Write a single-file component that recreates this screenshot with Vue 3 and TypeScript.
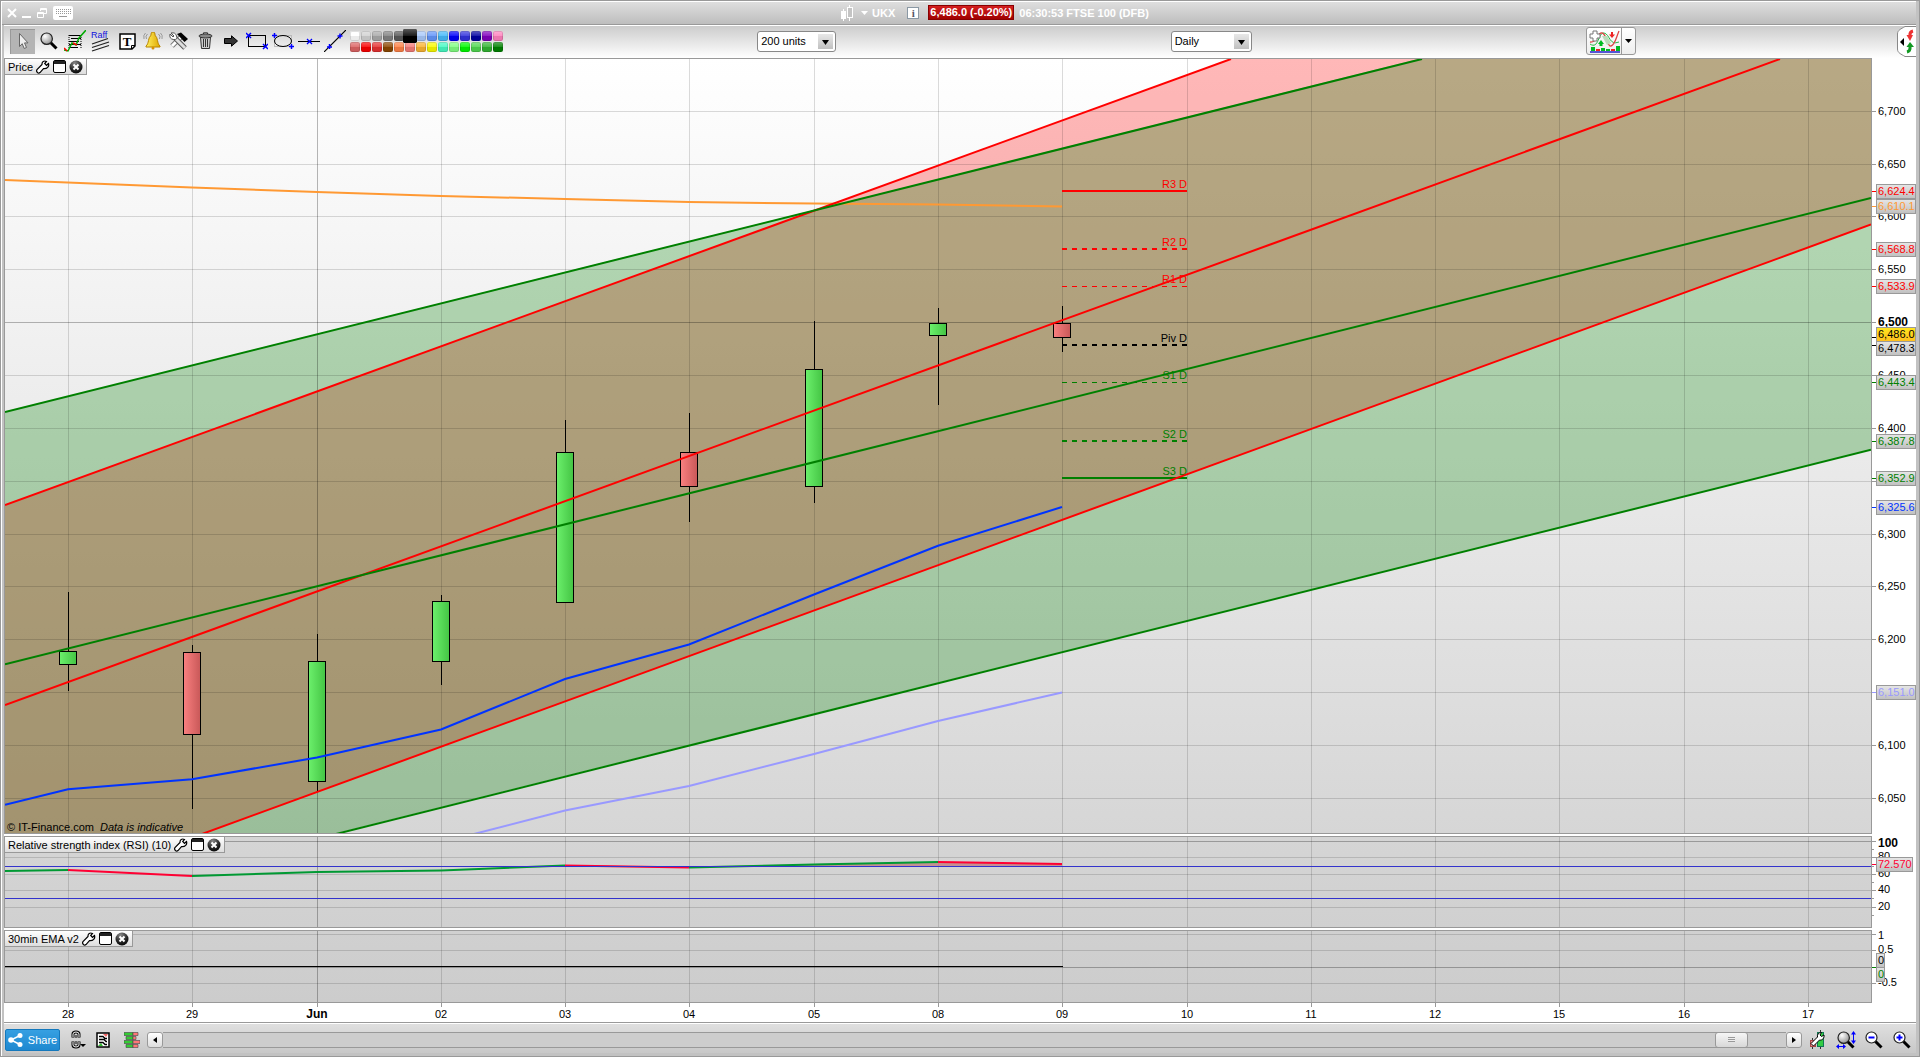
<script setup lang="ts">
import { computed, onBeforeUnmount, onMounted, ref } from 'vue'

type Pt = [number, number]
interface Candle { x: number; high: number; low: number; top: number; bottom: number; up: boolean }
interface Pivot { name: string; y: number; color: string; dash: boolean; w: number }
interface Tag { text: string; y: number; color: string; at?: number; gold?: boolean }

// Chart space: the plot spans x 5..1871 and y 59..833 before scaling.
const LEFT = 5
const TOP = 59
const AXIS = 45

const mainEl = ref<HTMLElement | null>(null)
const width = ref(1912)
const height = ref(776)
let observer: ResizeObserver | undefined

function measure() {
  if (!mainEl.value) return
  width.value = mainEl.value.clientWidth
  height.value = mainEl.value.clientHeight
}
onMounted(() => {
  measure()
  observer = new ResizeObserver(measure)
  if (mainEl.value) observer.observe(mainEl.value)
})
onBeforeUnmount(() => observer?.disconnect())

const plotW = computed(() => width.value - AXIS)
const sx = computed(() => (plotW.value - 1) / 1866)
const sy = computed(() => (height.value - 2) / 774)
const X = (v: number) => (v - LEFT) * sx.value + 1
const Y = (v: number) => (v - TOP) * sy.value + 1
const crisp = (v: number) => Math.floor(v) + 0.5
const path = (pts: Pt[]) => pts.map(([x, y]) => `${X(x)},${Y(y)}`).join(' ')

const days = [
  ['28', 68], ['29', 192], ['Jun', 317], ['02', 441], ['03', 565], ['04', 689], ['05', 814], ['08', 938],
  ['09', 1062], ['10', 1187], ['11', 1311], ['12', 1435], ['15', 1559], ['16', 1684], ['17', 1808],
].map(([label, x]) => ({ label: String(label), x: Number(x) }))

const prices = Array.from({ length: 14 }, (_, i) => {
  const p = 6700 - i * 50
  return { p, y: Math.round(110.7 + i * 50 * 1.0571), text: p.toLocaleString('en-US'), shown: p !== 6350 && p !== 6150 }
})

const redFill: Pt[] = [[5, 505], [1231, 59], [1871, -174], [1871, 224.5], [5, 906]]
const greenFill: Pt[] = [[5, 412], [1418, 59], [1871, -54], [1871, 449.7], [5, 916]]
const channels: { color: string; pts: Pt[] }[] = [
  { color: '#f00', pts: [[5, 505], [1231, 59]] },
  { color: '#f00', pts: [[5, 705], [1780, 59]] },
  { color: '#f00', pts: [[202, 834], [1871, 224.5]] },
  { color: '#008000', pts: [[5, 412], [1422, 59]] },
  { color: '#008000', pts: [[5, 664.3], [1871, 198]] },
  { color: '#008000', pts: [[336, 834], [1871, 449.7]] },
]
const orange: Pt[] = [[5, 180], [192, 187.5], [317, 192], [441, 196], [565, 199], [689, 202], [814, 203.5], [938, 204.5], [1062, 206.4]]
const blue: Pt[] = [[5, 804.7], [68, 789.3], [192, 779.3], [317, 757.5], [441, 729.5], [565, 679], [689, 644.5], [814, 594.5], [938, 545.7], [1062, 507]]
const lavender: Pt[] = [[470, 835], [565, 810.6], [689, 786], [814, 754], [938, 721], [1062, 692.5]]

const candles: Candle[] = [
  { x: 68, high: 592, low: 691, top: 651, bottom: 665, up: true },
  { x: 192, high: 645, low: 809, top: 652, bottom: 735, up: false },
  { x: 317, high: 634, low: 791, top: 661, bottom: 782, up: true },
  { x: 441, high: 595, low: 685, top: 601, bottom: 662, up: true },
  { x: 565, high: 420, low: 603, top: 452, bottom: 603, up: true },
  { x: 689, high: 413, low: 522, top: 452, bottom: 487, up: false },
  { x: 814, high: 321, low: 503, top: 369, bottom: 487, up: true },
  { x: 938, high: 308, low: 405, top: 323, bottom: 336, up: true },
  { x: 1062, high: 306, low: 352, top: 323, bottom: 338, up: false },
]

const pivots: Pivot[] = [
  { name: 'R3 D', y: 191, color: '#f00', dash: false, w: 2 },
  { name: 'R2 D', y: 249, color: '#f00', dash: true, w: 2 },
  { name: 'R1 D', y: 286, color: '#f00', dash: true, w: 1 },
  { name: 'Piv D', y: 345, color: '#000', dash: true, w: 2 },
  { name: 'S1 D', y: 382, color: '#008000', dash: true, w: 1 },
  { name: 'S2 D', y: 441, color: '#008000', dash: true, w: 2 },
  { name: 'S3 D', y: 478, color: '#008000', dash: false, w: 2 },
]

const tags: Tag[] = [
  { text: '6,610.1', y: 206, color: '#ff9933' },
  { text: '6,624.4', y: 191, color: '#f00' },
  { text: '6,568.8', y: 249, color: '#f00' },
  { text: '6,533.9', y: 286, color: '#f00' },
  { text: '6,478.3', y: 348, at: 345, color: '#000' },
  { text: '6,486.0', y: 334, at: 337, color: '#000', gold: true },
  { text: '6,443.4', y: 382, color: '#008000' },
  { text: '6,387.8', y: 441, color: '#008000' },
  { text: '6,352.9', y: 478, color: '#008000' },
  { text: '6,325.6', y: 507, color: '#0033ff' },
  { text: '6,151.0', y: 692, color: '#9999ff' },
]

// RSI panel, y measured from the panel's own top edge
const rsiGrid = [
  { y: 5, text: '100', dark: true }, { y: 21, text: '80' }, { y: 38, text: '60' },
  { y: 54, text: '40' }, { y: 71, text: '20' },
]
const rsiMinor = [13, 30, 46, 62, 79]
const rsiPts: Pt[] = [[5, 35], [68, 34], [192, 40], [317, 36], [441, 34.5], [565, 29.5], [689, 31.5], [814, 28.5], [938, 26], [1062, 28]]
const rsiColors = ['#009933', '#ff0033', '#009933', '#009933', '#009933', '#ff0033', '#009933', '#009933', '#ff0033']

const emaGrid = [{ y: 4, text: '1', base: 9 }, { y: 20, text: '0.5', base: 23 }, { y: 37, text: '', base: 0 }, { y: 53, text: '-0.5', base: 56 }]

const swatches = [
  ['#ffffff', '#d2d2d2', '#aaaaaa', '#828282', '#5a5a5a', '#000000', '#a8c8fa', '#6496fa', '#46b9fa', '#0000fa', '#3232dc', '#0000a0', '#8200be', '#ff82be'],
  ['#dc6464', '#fa0000', '#e63232', '#8c4600', '#ff8246', '#f57d78', '#fab432', '#fafa00', '#46fac3', '#82ff82', '#00fa00', '#50d750', '#32b432', '#008200'],
]
const selectedColor = ref('#000000')
const units = ref('200 units')
const frame = ref('Daily')
const scroll = ref(976)
</script>

<template>
  <div class="window">
    <svg class="defs" width="0" height="0" aria-hidden="true">
      <defs>
        <linearGradient id="bgMain" x1="0" y1="0" x2="0" y2="1"><stop offset="0" stop-color="#fff" /><stop offset="1" stop-color="#d6d6d6" /></linearGradient>
        <linearGradient id="bgRsi" x1="0" y1="0" x2="0" y2="1"><stop offset="0" stop-color="#d5d5d5" /><stop offset="1" stop-color="#d0d0d0" /></linearGradient>
        <linearGradient id="bgEma" x1="0" y1="0" x2="0" y2="1"><stop offset="0" stop-color="#d0d0d0" /><stop offset="1" stop-color="#cccccc" /></linearGradient>
        <linearGradient id="up"><stop offset="0" stop-color="#6cf06c" /><stop offset="1" stop-color="#44c444" /></linearGradient>
        <linearGradient id="down"><stop offset="0" stop-color="#fa8080" /><stop offset="1" stop-color="#c85858" /></linearGradient>
        <linearGradient id="tag" x1="0" y1="0" x2="0" y2="1"><stop offset="0" stop-color="#e6e6e6" /><stop offset="1" stop-color="#c0c0c0" /></linearGradient>
        <linearGradient id="gold" x1="0" y1="0" x2="0" y2="1"><stop offset="0" stop-color="#ffe61e" /><stop offset="1" stop-color="#ffbe1e" /></linearGradient>
        <radialGradient id="lens" cx=".35" cy=".3" r=".8"><stop offset="0" stop-color="#fff" /><stop offset="1" stop-color="#888" /></radialGradient>
        <radialGradient id="ball" cx=".4" cy=".2" r=".9"><stop offset="0" stop-color="#888" /><stop offset=".6" stop-color="#222" /><stop offset="1" stop-color="#000" /></radialGradient>
        <linearGradient id="bell"><stop offset="0" stop-color="#fff060" /><stop offset="1" stop-color="#e0a800" /></linearGradient>
        <symbol id="wrench" viewBox="0 0 14 14">
          <path d="M12.5 3.5 10.5 5.3 8.7 3.5 10.5 1.5C8 .2 5.800 1.800 6 4.500L1 9.500C-.2 11.500 2 14 4 12.600L7.500 8.600C11 9 13.500 6.500 12.500 3.500Z" fill="#fff" stroke="#000" stroke-width="1.2" />
        </symbol>
        <symbol id="maximize" viewBox="0 0 13 13">
          <rect x=".5" y=".5" width="12" height="12" rx="1.500" fill="#fff" stroke="#000" /><rect x="1" y="1" width="11" height="3" fill="#222" />
        </symbol>
        <symbol id="close" viewBox="0 0 14 14">
          <circle cx="7" cy="7" r="6.500" fill="url(#ball)" /><path d="M4.500 4.500 9.500 9.500M9.500 4.500 4.500 9.500" stroke="#fff" stroke-width="2" />
        </symbol>
        <symbol id="magnifier" viewBox="0 0 18 18">
          <path d="M10.500 10.500 16.500 16.500" stroke="#000" stroke-width="3" /><circle cx="6.700" cy="6.700" r="5.700" fill="url(#lens)" stroke="#222" stroke-width="1.200" />
        </symbol>
      </defs>
    </svg>

    <header class="title">
      <div class="win-btns">
        <button aria-label="Close window"><svg width="10" height="10"><path d="M1 1 9 9M9 1 1 9" stroke="#fff" stroke-width="2" /></svg></button>
        <button aria-label="Minimize"><svg width="10" height="10"><path d="M0 9H9" stroke="#fff" stroke-width="2" /></svg></button>
        <button aria-label="Restore"><svg width="10" height="10" fill="none" stroke="#fff"><path d="M3.500 3V.5H9.500V5.500H7M3 1.500H9.500" /><path d="M.5 4.500H6.500V9.500H.5ZM.5 5.500H6.500" /></svg></button>
        <button class="kbd" aria-label="Keyboard"><svg width="20" height="14"><rect width="20" height="14" rx="2" fill="#fff" /><path d="M3 3.500H18M3 5.500H18M3 7.500H18" stroke="#999" stroke-dasharray="1 1" /><path d="M6 10.500H14" stroke="#999" /></svg></button>
      </div>
      <div class="instrument">
        <svg width="15" height="16"><path d="M3.500 4V16M9.500 0V16" stroke="#fff" /><rect x="1" y="6" width="5" height="8" fill="#fff" /><rect x="7.500" y="2.500" width="5" height="10" fill="#c4c4c4" stroke="#fff" /></svg>
        <svg class="caret" width="7" height="4"><path d="M0 0H7L3.500 4Z" fill="#fff" /></svg>
        <span class="sym">UKX</span>
        <button class="info" aria-label="Information">i</button>
        <span class="quote">6,486.0 (-0.20%)</span>
        <span>06:30:53 FTSE 100 (DFB)</span>
      </div>
    </header>

    <div class="toolbar">
      <div class="tools">
        <button class="on" aria-label="Select"><svg width="18" height="18"><path d="M5.500 1.500V14.500L8.200 11.700 10.200 16.500 12.500 15.500 10.500 10.900H14Z" fill="#eee" stroke="#666" /></svg></button>
        <button aria-label="Zoom"><svg width="18" height="18"><use href="#magnifier" /></svg></button>
        <button aria-label="Indicators"><svg width="22" height="22" fill="none"><path d="M5 5.500H17M7 8.500H17M5 11.500H15M5 14.500H17M6 17.500H14" stroke="#000" /><path d="M5 5V18M17 5V18" stroke="#000" stroke-dasharray="1 1" /><path d="M0 20 4 21 8 13 12 15 15 8 22 0" stroke="#0a0" stroke-width="1.500" /><path d="M0 18 3 21M9 13 13 15" stroke="#f00" stroke-width="1.500" /></svg></button>
        <button aria-label="Raff channel"><svg width="20" height="22"><text x="0" y="8" font-size="9" fill="#11d">Raff</text><path d="M1 14 17 8.500M1 17.500 18 12M1 21 18 15.500" stroke="#222" stroke-width="1.300" /></svg></button>
        <button aria-label="Text"><svg width="17" height="17"><path d="M1 1H16V13L13 16H1Z" fill="#fff" stroke="#000" stroke-width="1.500" /><path d="M16 12.500H12.500V16" fill="none" stroke="#000" /><text x="8" y="13" text-anchor="middle" class="tglyph">T</text></svg></button>
        <button aria-label="Alert"><svg width="20" height="18"><path d="M3 14C6 12 5 5 8 3.500V2A1.500 1.500 0 0 1 12 2V3.500C15 5 14 12 17 14V15H3Z" fill="url(#bell)" stroke="#b88400" /><circle cx="10" cy="16" r="1.500" fill="#d89000" /><path d="M4.500 2Q2 4 3.500 7M2.500 1Q0 3 1 7M15.500 2Q18 4 16.500 7M17.500 1Q20 3 19 7" fill="none" stroke="#888" stroke-width=".8" /></svg></button>
        <button aria-label="Settings"><svg width="20" height="18"><path d="M12 5 3 14" stroke="#777" stroke-width="5" /><path d="M12 5 3 14" stroke="#fff" stroke-width="3" /><path d="M8 2 12 .5 19 7 15.500 10Z" fill="#000" /><path d="M5 5 16 16" stroke="#555" stroke-width="5" /><path d="M5 5 16 16" stroke="#ddd" stroke-width="3" /><path d="M2 1 5 4 4 5 1 2Q0 7 4.500 7.500T7.500 4Q6.500 0 2 1Z" fill="#fff" stroke="#555" /></svg></button>
        <button aria-label="Delete"><svg width="15" height="18"><path d="M2.500 5H12.500L11.500 16.500H3.500Z" fill="#ccc" stroke="#333" /><ellipse cx="7.500" cy="4" rx="6.500" ry="2" fill="#888" stroke="#333" /><path d="M5.500 2V.8H9.500V2M5.500 7V15M7.500 7V15M9.500 7V15" fill="none" stroke="#333" /></svg></button>
        <button aria-label="Arrow"><svg width="14" height="12"><path d="M.5 3.500H7.500V.8L13.500 6 7.500 11.200V8.500H.5Z" fill="#333" stroke="#000" /></svg></button>
        <button aria-label="Rectangle"><svg width="22" height="18" fill="none"><rect x="2.500" y="3.500" width="17" height="11" stroke="#000" /><path d="M0 1 5 6M5 1 0 6M17 12 22 17M22 12 17 17" stroke="#00f" stroke-width="1.500" /></svg></button>
        <button aria-label="Ellipse"><svg width="22" height="18" fill="none"><rect x="2.500" y="3.500" width="17" height="11" stroke="#bbb" /><ellipse cx="11" cy="9" rx="8.500" ry="5.500" stroke="#000" /><path d="M0 3.500H5M2.500 1V6M17 14.500H22M19.500 12V17" stroke="#00f" stroke-width="1.500" /></svg></button>
        <button aria-label="Horizontal line"><svg width="22" height="8" fill="none"><path d="M0 4.500H22" stroke="#000" /><path d="M9 2 14 7M14 2 9 7" stroke="#00f" stroke-width="1.300" /></svg></button>
        <button aria-label="Trend line"><svg width="22" height="22" fill="none"><path d="M0 22 22 0" stroke="#000" stroke-width="1.200" /><path d="M3 17H8M5.500 14V19M13.500 6H18.500M16 3.500V8.500" stroke="#00f" stroke-width="1.500" /></svg></button>
      </div>
      <div class="swatches">
        <div v-for="(row, r) in swatches" :key="r" class="swatch-row">
          <button v-for="c in row" :key="c" :class="{ sel: c === selectedColor }" :style="{ backgroundColor: c }" :aria-label="'Colour ' + c" @click="selectedColor = c" />
        </div>
      </div>
      <div class="gap-s" />
      <div class="combo units">
        <select v-model="units" aria-label="Units"><option>200 units</option><option>500 units</option></select>
        <svg width="7" height="5"><path d="M0 0H7L3.500 5Z" /></svg>
      </div>
      <div class="gap-l" />
      <div class="combo frame">
        <select v-model="frame" aria-label="Timeframe"><option>Daily</option><option>Weekly</option></select>
        <svg width="7" height="5"><path d="M0 0H7L3.500 5Z" /></svg>
      </div>
      <div class="gap-l" />
      <div class="indicator">
        <button aria-label="Add indicator">
          <svg width="31" height="23" fill="none"><path d="M1 14C10 20 9 2 15 3S20 16 30 12" stroke="#2b4" /><path d="M1 12C9 13 8 2 13 3S18 17 22 16 27 8 30 1" stroke="#d44" stroke-width="1.300" /><path d="M13 6 18 15 22 13 18 6Z" fill="#bdb" /><path d="M4 1H8V4H11V8H8V11H4V8H1V4H4Z" fill="#fff" stroke="#777" /><path d="M23 2V5" stroke="#e22" stroke-width="2" /><path d="M20 4.500H26L23 8Z" fill="#e22" /><path d="M12 16V13" stroke="#0b2" stroke-width="3" /><path d="M9 14H15L12 10Z" fill="#0b2" /><path d="M2 17H6V21H2ZM12 18H16V21H12ZM17 19H21V21H17ZM27 16H31V21H27Z" fill="#0b2" /><path d="M7 19H11V21H7ZM22 19H26V21H22Z" fill="#e22" /><path d="M1 22H31" stroke="#22c" stroke-width="1.500" /></svg>
        </button>
        <button class="drop" aria-label="Indicator menu"><svg width="7" height="4"><path d="M0 0H7L3.500 4Z" /></svg></button>
      </div>
      <div class="gap-r" />
      <button class="side" aria-label="Open side panel">
        <svg width="19" height="31"><path d="M19 .5H8C4 3 .5 4 .5 8V23C.5 27 4 28 8 30.500H19" fill="#fff" stroke="#888" /><path d="M7 12V20L3 16Z" /><path d="M16 5C12 6 13 9 13 10" fill="none" stroke="#e33" stroke-width="3" /><path d="M9.500 9H16L13 15Z" fill="#e33" /><path d="M10 26C14 25 13 22 13 21" fill="none" stroke="#192" stroke-width="3" /><path d="M9.500 21H17L13 16Z" fill="#192" /></svg>
      </button>
    </div>

    <main class="charts">
      <section ref="mainEl" class="panel price">
        <svg width="100%" height="100%">
          <clipPath id="plot"><rect x="1" y="1" :width="plotW - 1" :height="height - 2" /></clipPath>
          <rect x=".5" y=".5" :width="plotW" :height="height - 1" fill="url(#bgMain)" stroke="#999" />
          <g clip-path="url(#plot)">
            <polygon :points="path(redFill)" fill="#ff0000" fill-opacity=".28" />
            <polygon :points="path(greenFill)" fill="#008000" fill-opacity=".28" />
            <line v-for="d in days" :key="d.label" :x1="crisp(X(d.x))" :x2="crisp(X(d.x))" y1="0" :y2="height" :class="d.label === 'Jun' ? 'grid strong' : 'grid'" />
            <line v-for="g in prices" :key="g.p" x1="0" :x2="plotW" :y1="crisp(Y(g.y))" :y2="crisp(Y(g.y))" :class="g.p === 6500 ? 'grid strong' : 'grid'" />
            <polyline :points="path(orange)" class="curve" stroke="#ff9933" />
            <polyline :points="path(lavender)" class="curve" stroke="#9999ff" />
            <g v-for="c in candles" :key="c.x">
              <line :x1="crisp(X(c.x))" :x2="crisp(X(c.x))" :y1="Y(c.high)" :y2="Y(c.low)" stroke="#000" />
              <rect :x="crisp(X(c.x)) - 9" :y="crisp(Y(c.top))" width="17" :height="Math.round(Y(c.bottom) - Y(c.top)) - 1" :fill="c.up ? 'url(#up)' : 'url(#down)'" stroke="#000" />
            </g>
            <polyline :points="path(blue)" class="curve" stroke="#0033ff" />
            <g v-for="p in pivots" :key="p.name">
              <text :x="X(1187)" :y="Y(p.y) - 3" text-anchor="end" :fill="p.color">{{ p.name }}</text>
              <line :x1="X(1062)" :x2="X(1187)" :y1="Y(p.y) + (p.w === 1 ? 0.5 : 0)" :y2="Y(p.y) + (p.w === 1 ? 0.5 : 0)" :stroke="p.color" :stroke-width="p.w" :stroke-dasharray="p.dash ? '5 5' : undefined" />
            </g>
            <polyline v-for="(c, i) in channels" :key="i" :points="path(c.pts)" class="curve" :stroke="c.color" />
            <text x="3" :y="height - 3">© IT-Finance.com</text>
            <text x="96" :y="height - 3" font-style="italic">Data is indicative</text>
          </g>
          <g v-for="g in prices" :key="g.p">
            <line :x1="plotW + 1" :x2="plotW + 5" :y1="crisp(Y(g.y))" :y2="crisp(Y(g.y))" stroke="#999" />
            <text v-if="g.shown" :x="plotW + 7" :y="Y(g.y) + 4" :class="{ big: g.p === 6500 }">{{ g.text }}</text>
          </g>
          <g v-for="t in tags" :key="t.text">
            <line :x1="plotW + 1" :x2="plotW + 5" :y1="crisp(Y(t.at ?? t.y))" :y2="crisp(Y(t.at ?? t.y))" :stroke="t.color" />
            <rect :x="plotW + 5.5" :y="crisp(Y(t.y)) - 7" width="39" height="14" :fill="t.gold ? 'url(#gold)' : 'url(#tag)'" stroke="#999" />
            <text :x="plotW + 7" :y="Y(t.y) + 4" :fill="t.color">{{ t.text }}</text>
          </g>
        </svg>
        <div class="tab"><span>Price</span>
          <button aria-label="Price settings"><svg width="14" height="14"><use href="#wrench" /></svg></button>
          <button aria-label="Maximize price"><svg width="13" height="13"><use href="#maximize" /></svg></button>
          <button aria-label="Close price"><svg width="14" height="14"><use href="#close" /></svg></button>
        </div>
      </section>

      <section class="panel rsi">
        <svg width="100%" height="92">
          <rect x=".5" y=".5" :width="plotW" height="91" fill="url(#bgRsi)" stroke="#999" />
          <line v-for="d in days" :key="d.label" :x1="crisp(X(d.x))" :x2="crisp(X(d.x))" y1="1" y2="91" :class="d.label === 'Jun' ? 'grid strong' : 'grid'" />
          <g v-for="g in rsiGrid" :key="g.y">
            <line x1="1" :x2="plotW" :y1="g.y + 0.5" :y2="g.y + 0.5" :class="g.dark ? 'grid strong' : 'grid'" />
            <line :x1="plotW + 1" :x2="plotW + 5" :y1="g.y + 0.5" :y2="g.y + 0.5" stroke="#999" />
            <text :x="plotW + 7" :y="g.dark ? 11 : g.y + 3" :class="{ big: g.dark }">{{ g.text }}</text>
          </g>
          <line v-for="y in rsiMinor" :key="y" :x1="plotW + 1" :x2="plotW + 3" :y1="y + 0.5" :y2="y + 0.5" stroke="#999" />
          <polygon :points="`${X(545)},30 ${X(565)},29 ${X(689)},31 ${X(814)},28 ${X(938)},26 ${X(1062)},28 ${X(1062)},30`" fill="#c08080" fill-opacity=".8" />
          <line v-for="(c, i) in rsiColors" :key="i" :x1="X(rsiPts[i][0])" :y1="rsiPts[i][1]" :x2="X(rsiPts[i + 1][0])" :y2="rsiPts[i + 1][1]" :stroke="c" stroke-width="2" />
          <path :d="`M1 30.5H${plotW}M1 62.5H${plotW}`" stroke="#3333cc" />
          <line :x1="plotW + 1" :x2="plotW + 5" y1="28.500" y2="28.500" stroke="#ff0033" />
          <rect :x="plotW + 5.5" y="21.500" width="36" height="14" fill="url(#tag)" stroke="#999" />
          <text :x="plotW + 7" y="32" fill="#ff0033">72.570</text>
        </svg>
        <div class="tab"><span>Relative strength index (RSI) (10)</span>
          <button aria-label="RSI settings"><svg width="14" height="14"><use href="#wrench" /></svg></button>
          <button aria-label="Maximize RSI"><svg width="13" height="13"><use href="#maximize" /></svg></button>
          <button aria-label="Close RSI"><svg width="14" height="14"><use href="#close" /></svg></button>
        </div>
      </section>

      <section class="panel ema">
        <svg width="100%" height="92">
          <rect x=".5" y=".5" :width="plotW" height="72" fill="url(#bgEma)" stroke="#999" />
          <g v-for="d in days" :key="d.label">
            <line :x1="crisp(X(d.x))" :x2="crisp(X(d.x))" y1="1" y2="72" :class="d.label === 'Jun' ? 'grid strong' : 'grid'" />
            <line :x1="crisp(X(d.x))" :x2="crisp(X(d.x))" y1="73" y2="77" stroke="#999" />
            <text :x="X(d.x)" y="88" text-anchor="middle" :class="{ big: d.label === 'Jun' }">{{ d.label }}</text>
          </g>
          <g v-for="g in emaGrid" :key="g.y">
            <line x1="1" :x2="plotW" :y1="g.y + 0.5" :y2="g.y + 0.5" :class="g.y === 37 ? 'grid strong' : 'grid'" />
            <line :x1="plotW + 1" :x2="plotW + 5" :y1="g.y + 0.5" :y2="g.y + 0.5" :stroke="g.y === 37 ? '#008000' : '#999'" />
            <text :x="plotW + 7" :y="g.base">{{ g.text }}</text>
          </g>
          <line x1="1" :x2="X(1063)" y1="36.500" y2="36.500" stroke="#000" />
          <rect :x="plotW + 5.5" y="23.500" width="8" height="14" fill="url(#tag)" stroke="#999" />
          <text :x="plotW + 7" y="34">0</text>
          <rect :x="plotW + 5.5" y="37.500" width="8" height="14" fill="url(#tag)" stroke="#999" />
          <text :x="plotW + 7" y="48" fill="#008000">0</text>
        </svg>
        <div class="tab"><span>30min EMA v2</span>
          <button aria-label="EMA settings"><svg width="14" height="14"><use href="#wrench" /></svg></button>
          <button aria-label="Maximize EMA"><svg width="13" height="13"><use href="#maximize" /></svg></button>
          <button aria-label="Close EMA"><svg width="14" height="14"><use href="#close" /></svg></button>
        </div>
      </section>
    </main>

    <footer class="status">
      <button class="share">
        <svg width="15" height="14"><path d="M12 2.500 3 7 12 11.500" fill="none" stroke="#fff" stroke-width="1.500" /><circle cx="12" cy="2.500" r="2.500" fill="#fff" /><circle cx="3" cy="7" r="2.800" fill="#fff" /><circle cx="12" cy="11.500" r="2.500" fill="#fff" /></svg>
        Share
      </button>
      <button class="ic link" aria-label="Link"><svg width="15" height="19" fill="none"><path d="M2 7.500V4Q2 2 5 2T8 4V7.500M2 11.500V15Q2 17 5 17T8 15V11.500" stroke="#000" stroke-width="3" /><path d="M2 7V4Q2 2 5 2T8 4V7M2 12V15Q2 17 5 17T8 15V12" stroke="#fff" /><path d="M5 5V8M5 11V14" stroke="#000" /><path d="M9 14H15L12 17Z" fill="#000" /></svg></button>
      <button class="ic doc" aria-label="List"><svg width="14" height="16"><rect x="1" y="1" width="12" height="14" fill="#fff" stroke="#000" stroke-width="1.500" /><path d="M7 2H12L10 5Z" fill="#e66" /><path d="M2 14 5 11 7 14Z" fill="#3b3" /><path d="M3 4.500H7L9 6.500H11M3 7.500H8L10 9.500H11M3 10.500H7L9 12.500H11" fill="none" stroke="#000" stroke-width="1.300" /></svg></button>
      <button class="ic book" aria-label="Order book"><svg width="16" height="16"><path d="M0 .5H9V3.500H0ZM2 4.500H9V7.500H2ZM0 8.500H9V11.500H0ZM2 12.500H9V15.500H2Z" fill="#3c3" stroke="#444" stroke-width=".6" /><path d="M9 .5H14V3.500H9ZM9 4.500H12V7.500H9ZM9 8.500H16V11.500H9ZM9 12.500H14V15.500H9Z" fill="#f77" stroke="#444" stroke-width=".6" /></svg></button>
      <div class="scroller">
        <button aria-label="Scroll left"><svg width="4" height="6"><path d="M4 0V6L0 3Z" /></svg></button>
        <input v-model="scroll" type="range" min="0" max="1000" aria-label="Chart position" />
        <button aria-label="Scroll right"><svg width="4" height="6"><path d="M0 0V6L4 3Z" /></svg></button>
      </div>
      <button class="ic z1" aria-label="Chart settings"><svg width="16" height="19"><path d="M11.500 0V19M3.500 8V19" stroke="#333" /><rect x="8.500" y="2.500" width="6" height="14" fill="#3c4" stroke="#175" /><rect x="1.500" y="10.500" width="5" height="6" fill="#e88" stroke="#a44" /><path d="M15 5 12.500 6.500 11 5 12.500 2.500C9.500 2.500 8 4.500 8.500 7L2 13.500 4.500 16 10.500 10C13.500 10.500 15.500 8 15 5Z" fill="#fff" stroke="#000" /></svg></button>
      <button class="ic z2" aria-label="Fit"><svg width="21" height="18"><use href="#magnifier" x="1" width="18" height="18" /><path d="M17.500 2V11M1 15.500H9" stroke="#00f" /><path d="M15 3.500 17.500 0 20 3.500ZM15 9.500 17.500 13 20 9.500ZM3 13 0 15.500 3 18ZM7 13 10 15.500 7 18Z" fill="#00f" /></svg></button>
      <button class="ic z3" aria-label="Zoom out"><svg width="18" height="18"><path d="M10 10 16.500 16.500" stroke="#000" stroke-width="3" /><circle cx="6.500" cy="6.500" r="5.500" fill="#fff" stroke="#222" stroke-width="1.200" /><path d="M3.500 6.500H9.500" stroke="#00f" stroke-width="2" /></svg></button>
      <button class="ic z4" aria-label="Zoom in"><svg width="18" height="18"><path d="M10 10 16.500 16.500" stroke="#000" stroke-width="3" /><circle cx="6.500" cy="6.500" r="5.500" fill="#fff" stroke="#222" stroke-width="1.200" /><path d="M3.500 6.500H9.500M6.500 3.500V9.500" stroke="#00f" stroke-width="2" /></svg></button>
    </footer>
  </div>
</template>

<style>
body { background: #c2c2c2; }
</style>

<style scoped>
.window {
  box-sizing: border-box;
  height: 100vh;
  min-height: 400px;
  display: flex;
  flex-direction: column;
  border: 1px solid #999;
  padding: 0 3px 3px;
  background: #c2c2c2;
  box-shadow: inset 1px 0 #fff;
  overflow: hidden;
  font: 11px/14px "Liberation Sans", Arial, sans-serif;
  color: #000;
}
.defs { position: absolute; }
svg { display: block; }
button {
  margin: 0;
  padding: 0;
  border: 0;
  background: none;
  font: inherit;
  color: inherit;
  display: flex;
  align-items: center;
  justify-content: center;
}
.title {
  flex: none;
  height: 23px;
  margin-left: -2px;
  padding-left: 5px;
  display: flex;
  align-items: center;
  border-bottom: 1px solid #999;
  background: linear-gradient(#fff 0, #fff 1px, #dedede 1px, #bdbdbd 23px);
}
.win-btns { display: flex; align-items: center; gap: 5px; }
.kbd { margin-left: 1px; }
.instrument { flex: 1; display: flex; align-items: center; justify-content: center; color: #fff; font-weight: bold; }
.caret { margin-left: 6px; }
.sym { margin-left: 4px; }
.info {
  box-sizing: border-box;
  width: 12px;
  height: 12px;
  margin-left: 12px;
  border: 1px solid #8a98a4;
  background: #fff;
  color: #556;
  font: bold 11px/10px "Liberation Serif", serif;
}
.quote { box-sizing: border-box; height: 15px; margin: 0 5px 0 9px; padding: 0 1px; border: 1px solid #800; background: linear-gradient(#d42020, #a00000); line-height: 13px; }
.toolbar {
  flex: none;
  box-sizing: border-box;
  height: 33px;
  padding: 0 0 2px 6px;
  display: flex;
  align-items: center;
  border-top: 1px solid #fff;
  background: linear-gradient(#cccccc, #ffffff);
}
.tools { display: flex; }
.tools button { width: 26px; height: 25px; }
.tools .on { background: #b4b4b4; box-shadow: inset 1px 1px #999; width: 25px; margin-right: 1px; }
.tglyph { font: bold 13px "Liberation Serif", serif; }
.swatches { display: flex; flex-direction: column; gap: 1px; margin-left: 2px; }
.swatch-row { display: flex; gap: 1px; }
.swatch-row button {
  width: 10px;
  height: 10px;
  border-radius: 2px;
  background-image: linear-gradient(rgba(255, 255, 255, .35) 0, rgba(255, 255, 255, .1) 50%, rgba(0, 0, 0, .08) 51%);
  box-shadow: inset 0 0 0 1px rgba(0, 0, 0, .12);
}
.swatch-row .sel { position: relative; transform: scale(1.4); box-shadow: none; border-radius: 1px; z-index: 1; }
.gap-s { flex: 38; }
.gap-l { flex: 50; }
.gap-r { flex: 39; }
.combo { position: relative; height: 21px; }
.combo.units { width: 79px; }
.combo.frame { width: 81px; }
.combo select {
  width: 100%;
  height: 100%;
  box-sizing: border-box;
  appearance: none;
  border: 1px solid #888;
  border-radius: 3px;
  padding: 0 18px 0 3px;
  font: inherit;
  color: #000;
  background: linear-gradient(#e8e8e8, #c0c0c0) right 2px center / 15px 15px no-repeat, #fff;
}
.combo svg { position: absolute; right: 7px; top: 9px; pointer-events: none; }
.indicator { display: flex; height: 28px; box-sizing: border-box; border: 1px solid #999; border-radius: 3px; background: linear-gradient(#fff, #eee); }
.indicator button { width: 34px; }
.indicator .drop { width: 14px; border-left: 1px solid #999; }
.charts { flex: 1; min-height: 0; display: flex; flex-direction: column; gap: 2px; background: #fff; }
.panel { position: relative; }
.price { flex: 1; min-height: 0; }
.price > svg { position: absolute; inset: 0; }
.rsi, .ema { flex: none; height: 92px; }
.panel text { font-size: 11px; }
.panel text.big { font-size: 12px; font-weight: bold; }
.grid { stroke: #000; stroke-opacity: .14; }
.grid.strong { stroke-opacity: .28; }
.curve { fill: none; stroke-width: 2; }
.tab {
  position: absolute;
  left: 0;
  top: 0;
  box-sizing: border-box;
  height: 17px;
  padding: 0 3px;
  display: flex;
  align-items: center;
  gap: 3px;
  border: 1px solid #999;
  background: linear-gradient(#fff, #ddd);
}
.status {
  flex: none;
  box-sizing: border-box;
  height: 31px;
  display: flex;
  align-items: center;
  padding: 3px 5px 0 1px;
  border-top: 1px solid #999;
  box-shadow: inset 0 1px #fff;
  background: linear-gradient(#e0e0e0, #c8c8c8);
}
.share { width: 55px; height: 22px; border-radius: 2px; border: 1px solid #1478bc; box-sizing: border-box; background: linear-gradient(#36a0e2, #1e88d0); color: #fff; gap: 5px; }
.link { margin-left: 11px; }
.doc { margin-left: 10px; }
.book { margin-left: 14px; }
.scroller { flex: 1; height: 16px; margin: 0 7px; display: flex; }
.scroller button { box-sizing: border-box; width: 16px; border: 1px solid #999; border-radius: 3px; background: linear-gradient(#fff, #ddd); }
.scroller input {
  flex: 1;
  min-width: 0;
  height: 16px;
  box-sizing: border-box;
  margin: 0;
  appearance: none;
  border: solid #999;
  border-width: 1px 0;
  background: #cdcdcd;
}
.scroller input::-webkit-slider-thumb {
  appearance: none;
  box-sizing: border-box;
  width: 33px;
  height: 16px;
  border: 1px solid #999;
  border-radius: 3px;
  background: repeating-linear-gradient(#999 0, #999 1px, #eee 1px, #eee 2px) center / 7px 5px no-repeat, linear-gradient(#f6f6f6, #d8d8d8);
}
.z2 { margin-left: 11px; }
.z3 { margin-left: 8px; }
.z4 { margin-left: 10px; }
</style>
